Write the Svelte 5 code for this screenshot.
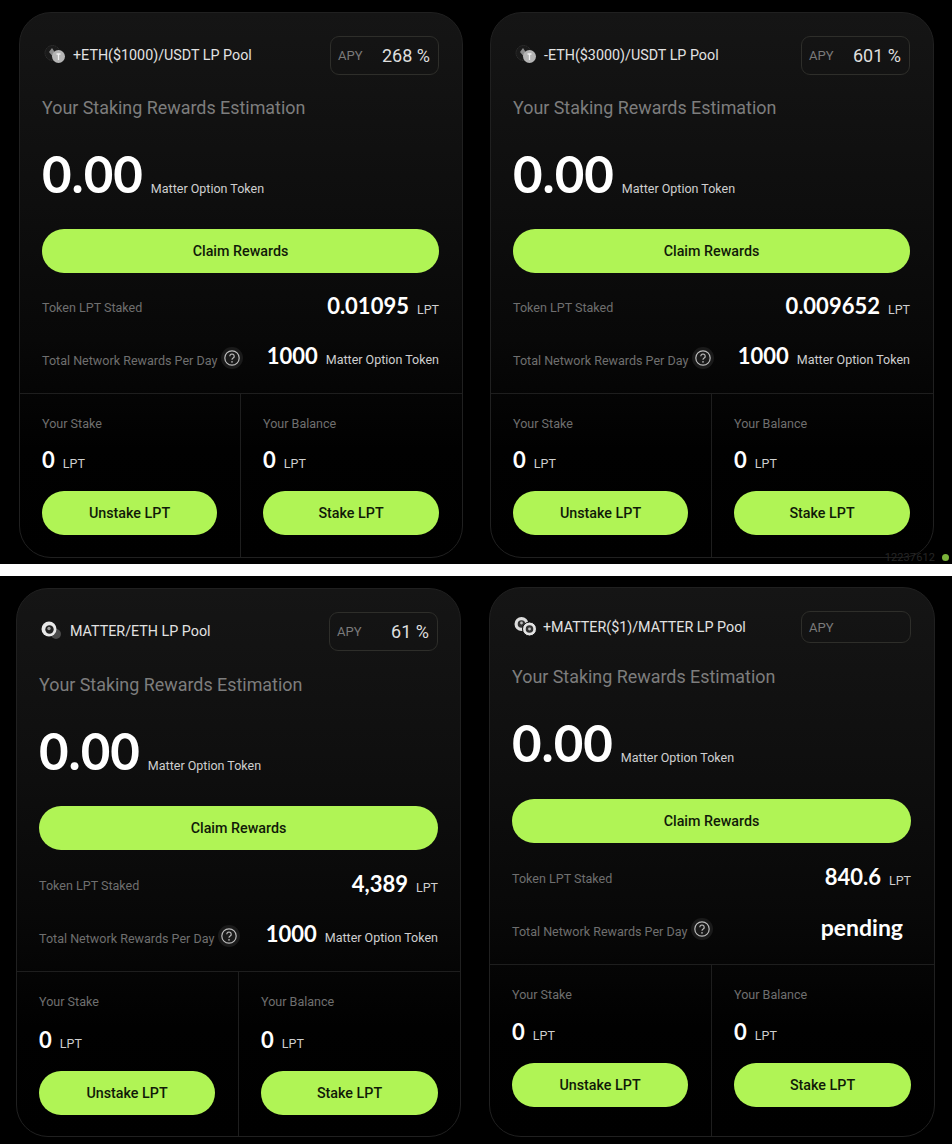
<script>
	const topPools = [
		{ cls: 'pool-a', icon: 'eth', name: '+ETH($1000)/USDT LP Pool', apy: '268 %', staked: '0.01095', rewards: '1000' },
		{ cls: 'pool-b', icon: 'eth', name: '-ETH($3000)/USDT LP Pool', apy: '601 %', staked: '0.009652', rewards: '1000' }
	];
	const bottomPools = [
		{ cls: 'pool-c', icon: 'matter', name: 'MATTER/ETH LP Pool', apy: '61 %', staked: '4,389', rewards: '1000' },
		{ cls: 'pool-d', icon: 'pair', name: '+MATTER($1)/MATTER LP Pool', apy: '', staked: '840.6', rewards: null }
	];
</script>

{#snippet coin(kind)}
	<svg class="coin" width="24" height="20" viewBox="0 0 24 20">
		{#if kind === 'eth'}
			<circle cx="8.5" cy="8" r="7.5" fill="#1a1a1a" stroke="#3a3a3a" stroke-dasharray="1 1" />
			<path d="M8 3 L12 9 L10 13 L5 7 Z" fill="#8a8a8a" />
			<circle cx="14.5" cy="11.5" r="6.5" fill="#b4b4b4" />
			<path d="M12.5 9h4M14.5 9v6" stroke="#f0f0f0" stroke-width="1.3" fill="none" />
		{:else if kind === 'matter'}
			<circle cx="15" cy="13" r="5" fill="#4a4a4a" />
			<circle cx="8" cy="8" r="7.5" fill="#e8e8e8" />
			<circle cx="8.5" cy="8.5" r="4.2" fill="#222" />
			<circle cx="8" cy="7.5" r="1.7" fill="#999" />
		{:else}
			<circle cx="7.5" cy="7" r="7" fill="#ddd" />
			<circle cx="7.5" cy="7" r="3.8" fill="#333" />
			<circle cx="15.5" cy="12" r="7" fill="#e4e4e4" stroke="#111" />
			<circle cx="15.5" cy="12" r="3.8" fill="#333" />
			<circle cx="15.5" cy="12" r="1.4" fill="#bbb" />
			<circle cx="7.5" cy="6" r="1.4" fill="#bbb" />
		{/if}
	</svg>
{/snippet}

{#snippet card(pool)}
	<section class="card {pool.cls}">
		<div class="upper">
			<header class="head">
				<div class="pool-name">
					{@render coin(pool.icon)}
					<span>{pool.name}</span>
				</div>
				<div class="apy">
					<span class="apy-label">APY</span>
					<span class="apy-value">{pool.apy}</span>
				</div>
			</header>
			<h2 class="title">Your Staking Rewards Estimation</h2>
			<div class="estimate">
				<span class="big">0.00</span>
				<span class="unit">Matter Option Token</span>
			</div>
			<button class="btn claim">Claim Rewards</button>
			<div class="row staked">
				<span class="label">Token LPT Staked</span>
				<span class="value-group">
					<span class="num">{pool.staked}</span>
					<span class="unit">LPT</span>
				</span>
			</div>
			<div class="row network">
				<span class="label with-help">
					Total Network Rewards Per Day
					<svg class="help" width="22" height="22" viewBox="0 0 22 22">
						<circle cx="11" cy="11" r="11" fill="#1a1a1a" />
						<circle cx="11" cy="11" r="7.2" fill="none" stroke="#bbb" stroke-width="1.2" />
						<path d="M8.8 9.2a2.2 2.2 0 1 1 3.4 1.9c-.8.5-1.2.9-1.2 1.7" fill="none" stroke="#bbb" stroke-width="1.2" />
						<circle cx="11" cy="14.9" r=".8" fill="#bbb" />
					</svg>
				</span>
				{#if pool.rewards}
					<span class="value-group">
						<span class="num">{pool.rewards}</span>
						<span class="unit">Matter Option Token</span>
					</span>
				{:else}
					<span class="num pending">pending</span>
				{/if}
			</div>
		</div>
		<div class="lower">
			<div class="cell stake">
				<span class="label">Your Stake</span>
				<div class="amount"><span class="num">0</span><span class="unit">LPT</span></div>
				<button class="btn">Unstake LPT</button>
			</div>
			<div class="cell balance">
				<span class="label">Your Balance</span>
				<div class="amount"><span class="num">0</span><span class="unit">LPT</span></div>
				<button class="btn">Stake LPT</button>
			</div>
		</div>
	</section>
{/snippet}

<main class="page">
	<div class="band band-top">
		{#each topPools as pool}
			{@render card(pool)}
		{/each}
		<div class="block-tag"><span>12237612</span><i></i></div>
	</div>
	<div class="band band-bottom">
		{#each bottomPools as pool}
			{@render card(pool)}
		{/each}
	</div>
</main>

<style>
	:global(body) {
		margin: 0;
		background: #fff;
	}

	.page {
		width: 952px;
		height: 1144px;
		display: flex;
		flex-direction: column;
		gap: 12px;
		font-family: Roboto, sans-serif;
	}

	.band {
		background: #000;
		display: grid;
		position: relative;
		box-sizing: border-box;
		align-items: start;
	}

	.band-top {
		height: 564px;
		padding: 12px 18px 0 19px;
		grid-template-columns: 444px 444px;
		gap: 27px;
	}

	.band-bottom {
		height: 568px;
		padding: 11px 17px 0 16px;
		grid-template-columns: 445px 446px;
		gap: 28px;
	}

	.block-tag {
		position: absolute;
		right: 3px;
		bottom: 0;
		height: 14px;
		display: flex;
		align-items: center;
		gap: 7px;
		font-size: 11px;
		color: #262626;
		letter-spacing: 0.1px;
	}

	.block-tag i {
		width: 7px;
		height: 7px;
		border-radius: 50%;
		background: #7bb33a;
	}

	.card {
		box-sizing: border-box;
		border: 1px solid #202020;
		border-radius: 32px;
		background: linear-gradient(#151515 0, #0e0e0e 35%, #080808 60%, #010101 80%, #000 100%);
		display: flex;
		flex-direction: column;
		overflow: hidden;
	}

	.pool-a,
	.pool-b {
		height: 546px;
	}

	.pool-c {
		height: 549px;
		margin-top: 1px;
	}

	.pool-d {
		height: 550px;
	}

	.upper {
		padding: 22px 23px 0 22px;
		flex: none;
	}

	.head {
		display: flex;
		justify-content: space-between;
		align-items: center;
		height: 40px;
	}

	.pool-name {
		display: flex;
		align-items: center;
		gap: 5px;
		color: #e2e2e2;
		font-size: 14.3px;
		margin-left: 2px;
	}

	.apy {
		box-sizing: border-box;
		width: 109px;
		height: 39px;
		border: 1px solid #2e2e2a;
		border-radius: 9px;
		padding: 0 8px 0 7px;
		display: flex;
		justify-content: space-between;
		align-items: center;
	}

	.apy-label {
		font-size: 13px;
		color: #7a7a7a;
	}

	.apy-value {
		font-size: 18px;
		color: #dedede;
	}

	.title {
		margin: 21px 0 0;
		font-size: 17.9px;
		line-height: 24px;
		font-weight: 400;
		color: #7d7d7d;
	}

	.estimate {
		display: flex;
		align-items: baseline;
		gap: 8px;
		height: 60px;
		margin-top: 24px;
		line-height: 60px;
	}

	.big {
		font-family: Lato, sans-serif;
		font-size: 51px;
		font-weight: 700;
		color: #fff;
	}

	.unit {
		font-size: 12.5px;
		color: #cfcfcf;
	}

	.btn {
		display: block;
		width: 100%;
		height: 44px;
		border: none;
		border-radius: 22px;
		background: #b0f455;
		color: #101a08;
		font-family: Roboto, sans-serif;
		font-size: 14.3px;
		font-weight: 500;
		padding: 0;
	}

	.claim {
		margin-top: 25px;
	}

	.row {
		display: flex;
		justify-content: space-between;
		align-items: center;
	}

	.staked {
		margin-top: 20px;
		height: 28px;
	}

	.staked .value-group {
		margin-top: -3px;
	}

	.network {
		margin-top: 24px;
		height: 28px;
	}

	.network .value-group {
		margin-top: -8px;
	}

	.label {
		font-size: 12.55px;
		color: #6f6f6f;
	}

	.with-help {
		display: flex;
		align-items: center;
		gap: 4px;
		margin-top: 2px;
	}

	.help {
		margin-top: -5px;
	}

	.value-group {
		display: flex;
		align-items: baseline;
		gap: 8px;
	}

	.num {
		font-family: Lato, sans-serif;
		font-size: 22px;
		font-weight: 700;
		color: #fff;
	}

	.pending {
		font-size: 23px;
		margin-right: 8px;
		margin-top: -6px;
	}

	.lower {
		flex: 1;
		margin-top: 20px;
		border-top: 1px solid #1e1e1e;
		display: grid;
		grid-template-columns: 221px 1fr;
	}

	.cell {
		padding: 22px 23px 0 22px;
		display: flex;
		flex-direction: column;
		align-items: flex-start;
	}

	.stake {
		border-right: 1px solid #1e1e1e;
	}

	.amount {
		display: flex;
		align-items: baseline;
		gap: 8px;
		margin-top: 14px;
		line-height: 30px;
	}

	.cell .btn {
		margin-top: 12px;
	}

	.pool-c .lower,
	.pool-d .lower {
		grid-template-columns: 222px 1fr;
	}

	.pool-c .upper,
	.pool-c .balance {
		padding-right: 22px;
	}

	.pool-c .title {
		margin-top: 22px;
	}

	.pool-c .staked {
		margin-top: 21px;
	}

	.pool-c .amount {
		margin-top: 16px;
	}

	.pool-d .upper {
		padding-top: 23px;
	}

	.pool-d .head,
	.pool-d .apy {
		height: 32px;
	}

	.pool-d .apy {
		width: 110px;
	}

	.pool-d .title {
		margin-top: 22px;
	}

	.pool-d .claim {
		margin-top: 26px;
	}

	.pool-d .staked {
		margin-top: 21px;
	}

	.pool-d .amount {
		margin-top: 15px;
	}
</style>
